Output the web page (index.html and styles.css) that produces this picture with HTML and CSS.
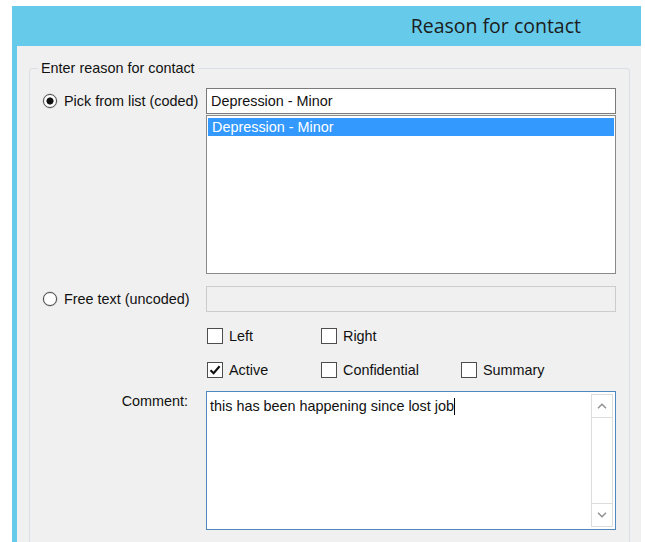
FILE: index.html
```html
<!DOCTYPE html>
<html lang="en">
<head>
<meta charset="utf-8">
<title>Reason for contact</title>
<link rel="stylesheet" href="styles.css">
</head>
<body>
<div class="window">
  <header class="titlebar">
    <h1 class="title">Reason for contact</h1>
  </header>
  <main class="panel">
    <fieldset class="group">
      <legend class="group-caption">Enter reason for contact</legend>
      <div class="form">
        <div class="option"><span class="radio is-on"></span>Pick from list (coded)</div>
        <div class="picker">
          <div class="combo">Depression - Minor</div>
          <ul class="listbox">
            <li class="item is-selected">Depression - Minor</li>
          </ul>
        </div>

        <div class="option"><span class="radio"></span>Free text (uncoded)</div>
        <div class="textbox is-disabled"></div>

        <div class="flags">
          <div class="check"><span class="box"></span>Left</div>
          <div class="check"><span class="box"></span>Right</div>
          <span></span>
          <div class="check">
            <span class="box is-on">
              <svg class="tick" viewBox="0 0 14 14" width="14" height="14"><path d="M2.5 7.2 L5.6 10.3 L11.6 3.2" fill="none" stroke="#111" stroke-width="2.1"/></svg>
            </span>Active
          </div>
          <div class="check"><span class="box"></span>Confidential</div>
          <div class="check"><span class="box"></span>Summary</div>
        </div>

        <div class="field-label">Comment:</div>
        <div class="memo">
          <div class="memo-text">this has been happening since lost job<span class="caret"></span></div>
          <div class="vscroll">
            <div class="arrow arrow-up">
              <svg viewBox="0 0 10 6" width="10" height="6"><path d="M1 5.2 L5 1.2 L9 5.2" fill="none" stroke="#8c8c8c" stroke-width="1.3"/></svg>
            </div>
            <div class="arrow arrow-down">
              <svg viewBox="0 0 10 6" width="10" height="6"><path d="M1 0.8 L5 4.8 L9 0.8" fill="none" stroke="#8c8c8c" stroke-width="1.3"/></svg>
            </div>
          </div>
        </div>
      </div>
    </fieldset>
  </main>
</div>
</body>
</html>
```
FILE: styles.css
```css
* {
  box-sizing: border-box;
}

html,
body {
  margin: 0;
  height: 100%;
}

body {
  background: #ffffff;
  overflow: hidden;
  font-family: "Liberation Sans", Arial, sans-serif;
  font-size: 14.4px;
  color: #111111;
}

/* dialog frame: blue caption band plus a thin blue edge on the left */
.window {
  margin: 6px 4px 0 12px;
  height: calc(100% - 6px);
  background: #66cbea;
  display: flex;
  flex-direction: column;
}

.titlebar {
  height: 40px;
  flex: none;
  display: flex;
  align-items: center;
  justify-content: flex-end;
  padding-right: 60px;
}

.title {
  margin: 0;
  font: 400 19.5px/1 "Open Sans", "Noto Sans", sans-serif;
  color: #1c1c1c;
}

.panel {
  flex: 1;
  margin-left: 5px;
  background: #f0f0f0;
  padding: 14px 11px 0 12px;
  overflow: hidden;
}

/* group box */
.group {
  margin: 0;
  min-height: 620px;
  padding: 12px 13px 0 13px;
  border: 1px solid #d9dfe5;
  border-radius: 3px;
}

.group-caption {
  padding: 0 3px;
  margin-left: -5px;
  line-height: 16px;
}

.form {
  display: grid;
  grid-template-columns: 163px 410px;
  row-gap: 12px;
}

/* radio options */
.option {
  display: flex;
  align-items: center;
  gap: 7px;
  height: 26px;
  white-space: nowrap;
}

.radio {
  flex: none;
  width: 14px;
  height: 14px;
  border-radius: 50%;
  border: 1px solid #4a4a4a;
  background: #ffffff;
  box-shadow: 0 0 0 0.5px #bdbdbd;
}

.radio.is-on {
  background: radial-gradient(circle, #111111 0 3.2px, #ffffff 3.9px);
}

/* coded picker: combo box over a list */
.picker {
  display: flex;
  flex-direction: column;
  gap: 1px;
}

.combo {
  height: 26px;
  border: 1px solid #7a7a7a;
  background: #ffffff;
  padding: 0 4px;
  display: flex;
  align-items: center;
}

.listbox {
  margin: 0;
  padding: 2px 1px;
  list-style: none;
  height: 159px;
  border: 1px solid #8a8a8a;
  background: #ffffff;
}

.item {
  height: 18px;
  line-height: 18px;
  padding-left: 4px;
}

.item.is-selected {
  background: #3399ff;
  color: #ffffff;
}

.textbox {
  height: 26px;
  border: 1px solid #cccccc;
  background: #ffffff;
}

.textbox.is-disabled {
  background: #f0f0f0;
}

/* check box flags */
.flags {
  grid-column: 2;
  margin-top: 4px;
  display: grid;
  grid-template-columns: 114px 140px auto;
  row-gap: 18px;
}

.check {
  display: flex;
  align-items: center;
  gap: 6px;
  height: 16px;
  white-space: nowrap;
}

.box {
  flex: none;
  width: 16px;
  height: 16px;
  margin-left: 1px;
  border: 1px solid #4d4d4d;
  background: #ffffff;
  display: flex;
  align-items: center;
  justify-content: center;
}

.tick {
  display: block;
}

/* comment memo */
.field-label {
  margin-top: 1px;
  padding-top: 2px;
  padding-right: 18px;
  text-align: right;
}

.memo {
  margin-top: 1px;
  height: 139px;
  border: 1px solid #4f87bf;
  background: #ffffff;
  display: flex;
  padding: 2px 2px 2px 0;
}

.memo-text {
  flex: 1;
  padding: 4px 0 0 3px;
  line-height: 17px;
  white-space: nowrap;
}

.caret {
  display: inline-block;
  width: 1px;
  height: 17px;
  background: #000000;
  vertical-align: -4px;
}

.vscroll {
  width: 22px;
  border: 1px solid #dcdcdc;
  display: flex;
  flex-direction: column;
  justify-content: space-between;
}

.arrow {
  height: 23px;
  display: flex;
  align-items: center;
  justify-content: center;
}

.arrow-up {
  border-bottom: 1px solid #dcdcdc;
}

.arrow-down {
  border-top: 1px solid #dcdcdc;
}

.arrow svg {
  display: block;
}
```
